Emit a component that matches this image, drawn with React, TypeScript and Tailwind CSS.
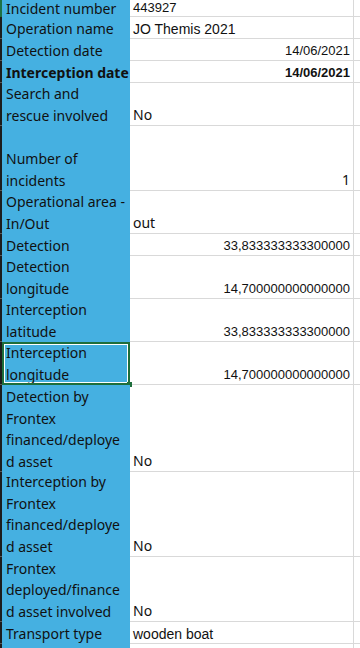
type Row = {
  label: string[];
  value?: string;
  h: number;
  align?: "left" | "right";
  bold?: boolean;
  big?: boolean;
  text?: boolean;
  selected?: boolean;
};

const rows: Row[] = [
  { label: ["Incident number"], value: "443927", h: 17 },
  { label: ["Operation name"], value: "JO Themis 2021", h: 22, text: true },
  { label: ["Detection date"], value: "14/06/2021", h: 22, align: "right" },
  { label: ["Interception date"], value: "14/06/2021", h: 22, align: "right", bold: true },
  { label: ["Search and", "rescue involved"], value: "No", h: 43, big: true },
  { label: ["Number of", "incidents"], value: "1", h: 65, align: "right", big: true },
  { label: ["Operational area -", "In/Out"], value: "out", h: 43, big: true },
  { label: ["Detection"], value: "33,833333333300000", h: 22, align: "right" },
  { label: ["Detection", "longitude"], value: "14,700000000000000", h: 43, align: "right" },
  { label: ["Interception", "latitude"], value: "33,833333333300000", h: 43, align: "right" },
  { label: ["Interception", "longitude"], value: "14,700000000000000", h: 43, align: "right", selected: true },
  { label: ["Detection by", "Frontex", "financed/deploye", "d asset"], value: "No", h: 87, big: true },
  { label: ["Interception by", "Frontex", "financed/deploye", "d asset"], value: "No", h: 85, big: true },
  { label: ["Frontex", "deployed/finance", "d asset involved"], value: "No", h: 65, big: true },
  { label: ["Transport type"], value: "wooden boat", h: 22, text: true },
  { label: [""], h: 22 },
];

const labelFont = "font-['Noto_Sans',sans-serif]";
const cellFont = "font-['Liberation_Sans',Arial,sans-serif]";

export default function App() {
  return (
    <div className="h-[648px] w-[360px] overflow-hidden bg-white text-[#111111]">
      {rows.map((r, i) => (
        <div key={i} className="flex" style={{ height: r.h }}>
          <div
            className={`w-[2px] shrink-0 border-b ${
              i === 0 ? "border-[#1e6e3c] bg-[#1e7145]" : "border-[#5a5a5a] bg-[#1c1c1c]"
            }`}
          />
          <div
            className={`relative flex w-[128px] shrink-0 flex-col justify-end bg-[#45b0e1] pl-[4px] text-[14px] ${labelFont} ${
              i === 0 ? "leading-[17px]" : "leading-[21.5px]"
            } ${r.bold ? "font-bold" : ""} ${
              r.selected
                ? "shadow-[inset_0_0_0_3px_#ffffff] outline outline-2 -outline-offset-2 outline-[#1e6e3c]"
                : ""
            }`}
          >
            {r.label.map((l, j) => (
              <div key={j} className="whitespace-nowrap">
                {l || "\u00a0"}
              </div>
            ))}
            {r.selected && (
              <div className="absolute bottom-[-2px] right-[-2px] h-[5px] w-[5px] bg-[#1e6e3c]" />
            )}
          </div>
          <div
            className={`flex w-[224px] shrink-0 items-end border-b border-r border-[#d9d9d9] px-[3px] ${
              r.align === "right" ? "justify-end" : "justify-start"
            } ${
              r.big
                ? `${labelFont} pb-[1px] text-[14px]`
                : r.text
                  ? `${cellFont} text-[14px]`
                  : `${cellFont} text-[13px]`
            } ${r.bold ? "font-bold" : ""}`}
          >
            <span className={`whitespace-nowrap ${i === 0 ? "leading-[16px]" : "leading-[18px]"}`}>
              {r.value}
            </span>
          </div>
          <div className="flex-1 border-b border-[#d9d9d9]" />
        </div>
      ))}
    </div>
  );
}
